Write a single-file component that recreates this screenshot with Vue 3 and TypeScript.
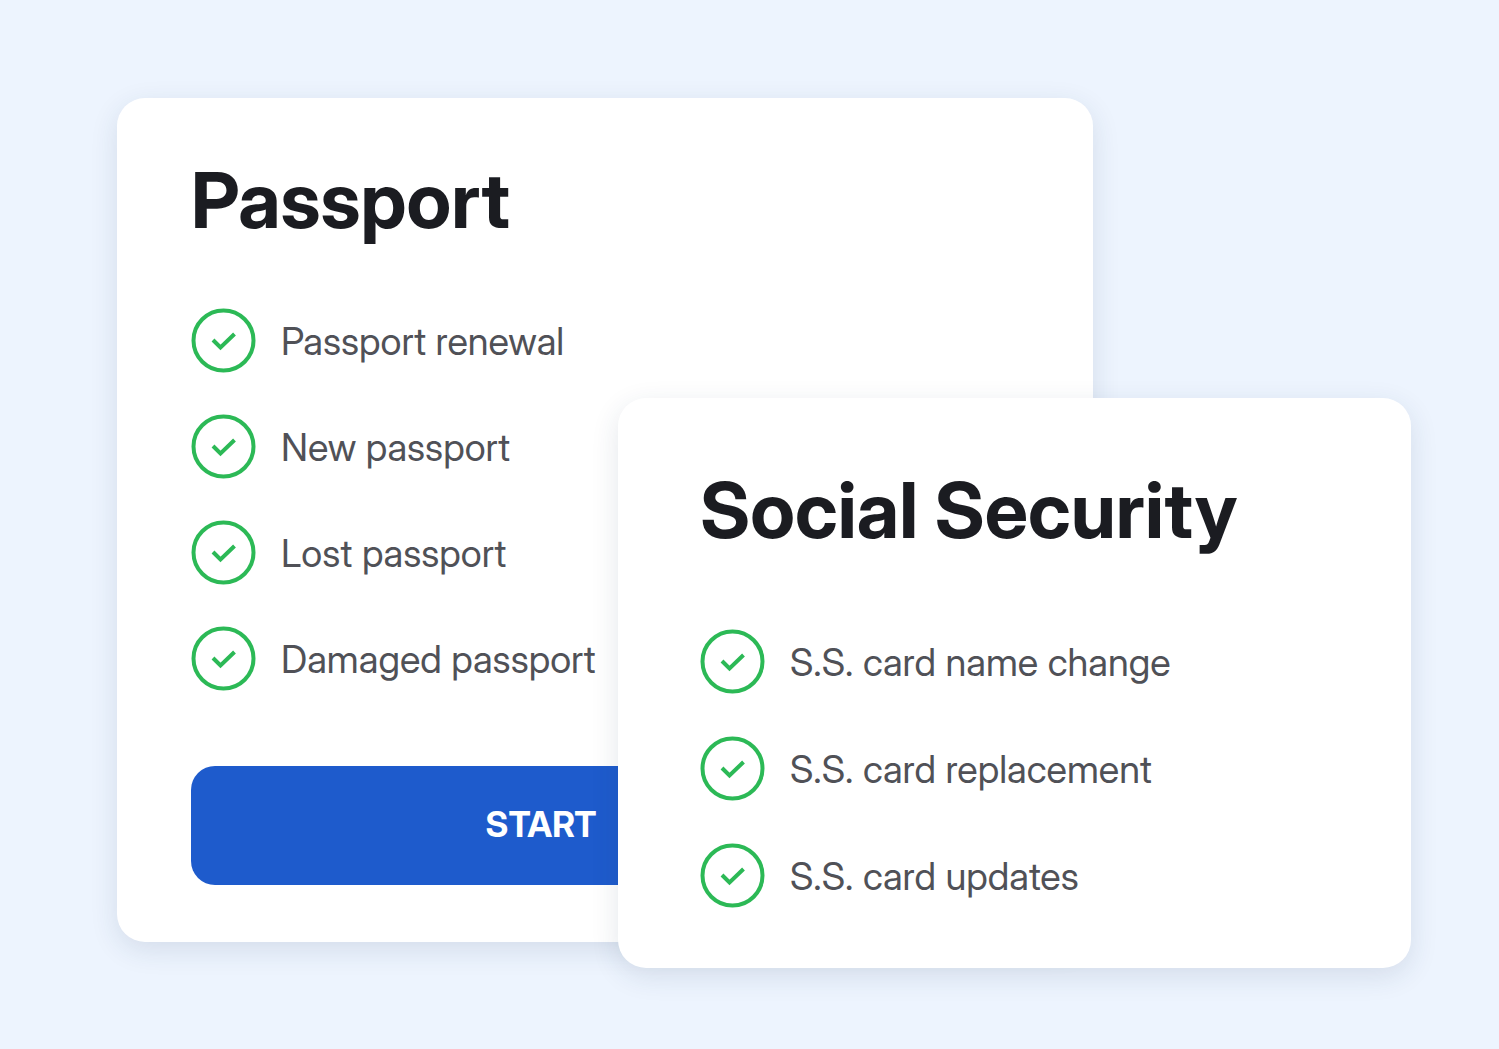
<script setup lang="ts">
interface Service {
  id: string
  title: string
  items: string[]
  action?: string
}

const services: Service[] = [
  {
    id: 'passport',
    title: 'Passport',
    items: ['Passport renewal', 'New passport', 'Lost passport', 'Damaged passport'],
    action: 'START',
  },
  {
    id: 'social',
    title: 'Social Security',
    items: ['S.S. card name change', 'S.S. card replacement', 'S.S. card updates'],
  },
]
</script>

<template>
  <main class="stage">
    <section v-for="s in services" :key="s.id" class="card" :class="s.id">
      <h2>{{ s.title }}</h2>
      <ul>
        <li v-for="item in s.items" :key="item">
          <svg viewBox="0 0 66 66" aria-hidden="true">
            <circle cx="32.500" cy="32.500" r="30" />
            <path d="M22 32l7.500 7.500 14-13.500" />
          </svg>
          <span>{{ item }}</span>
        </li>
      </ul>
      <button v-if="s.action" type="button">{{ s.action }}</button>
    </section>
  </main>
</template>

<style>
body {
  margin: 0;
  background: #edf4fe;
}
</style>

<style scoped>
.stage {
  display: grid;
  grid-template-columns: minmax(0, 501fr) minmax(0, 475fr) minmax(0, 318fr);
  align-items: start;
  box-sizing: border-box;
  min-height: 100vh;
  padding: 98px 88px 80px 117px;
  background: #edf4fe;
  font-family: "Inter Display", Inter, "Liberation Sans", sans-serif;
  font-variation-settings: "opsz" 32;
}

.card {
  box-sizing: border-box;
  border-radius: 28px;
  background: #fff;
  box-shadow: 0 8px 28px rgba(30, 55, 90, 0.12);
}

.passport {
  grid-area: 1 / 1 / 2 / 3;
  padding: 56px 74px 57px;
}

.social {
  grid-area: 1 / 2 / 2 / 4;
  z-index: 1;
  margin-top: 300px;
  padding: 66px 82px 59px;
}

h2 {
  margin: 0;
  color: #1b1c21;
  font-size: 77px;
  font-weight: 700;
  line-height: 92px;
  white-space: nowrap;
}

ul {
  display: flex;
  flex-direction: column;
  gap: 40px;
  margin: 0;
  padding: 0;
  list-style: none;
}

.passport ul {
  margin-top: 62px;
}

.social ul {
  gap: 41px;
  margin-top: 73px;
}

li {
  display: flex;
  align-items: center;
  gap: 24px;
  color: #505157;
  font-size: 38px;
  line-height: 66px;
  white-space: nowrap;
}

svg {
  flex: none;
  width: 66px;
  height: 66px;
  fill: none;
  stroke: #2cb956;
  stroke-width: 4;
}

button {
  display: block;
  width: 100%;
  max-width: 700px;
  height: 119px;
  margin-top: 74px;
  padding: 0 0 4px;
  border: 0;
  border-radius: 24px;
  background: #1e5bcc;
  color: #fff;
  font-family: inherit;
  font-size: 35px;
  font-weight: 700;
}
</style>
